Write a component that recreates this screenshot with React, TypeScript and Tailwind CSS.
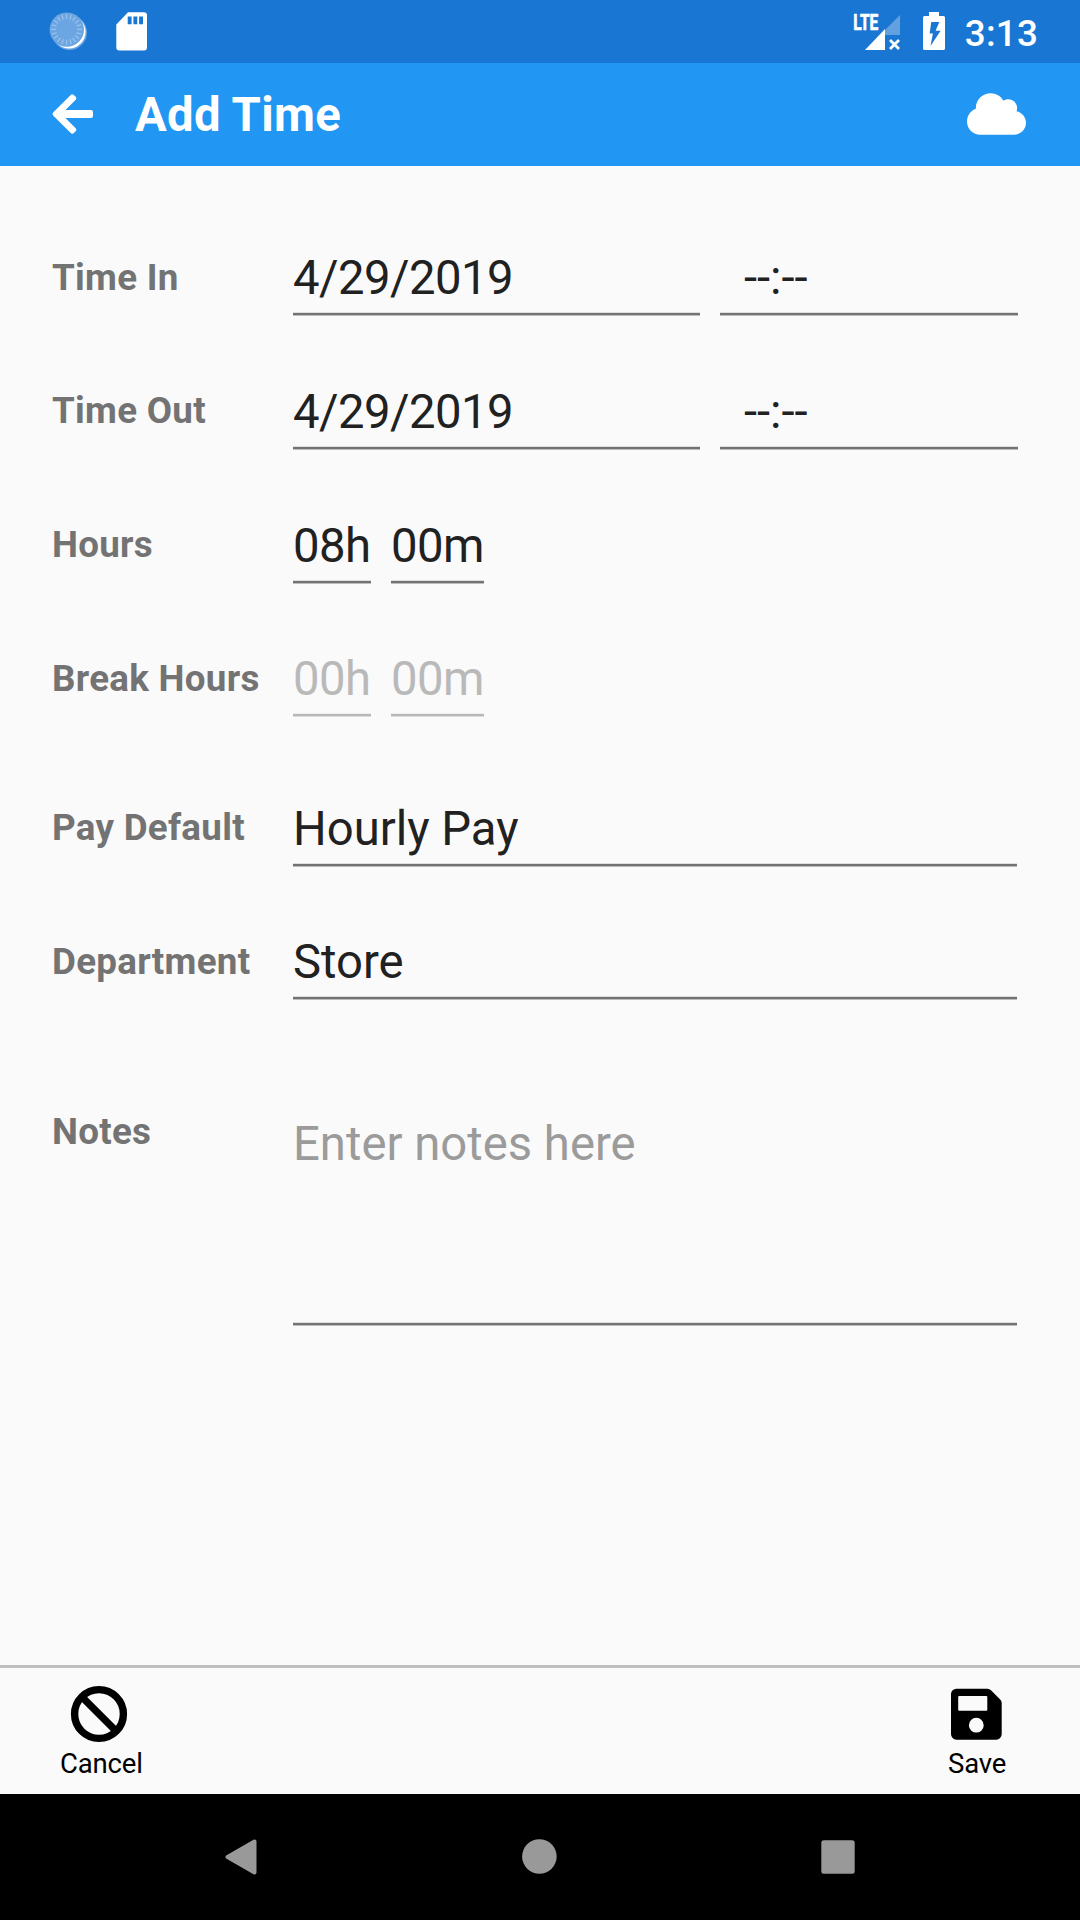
import React from "react";
import { FaCloud } from "react-icons/fa";

interface UnderlineProps {
  disabled?: boolean;
}

const Underline: React.FC<UnderlineProps> = ({ disabled }) => (
  <div
    className={`h-1 w-full border-y ${
      disabled ? "border-t-[#eeeeee] border-b-[#dcdcdc] bg-[#b8b8b8]" : "border-t-[#dedede] border-b-[#bdbdbd] bg-[#737373]"
    }`}
  />
);

interface FieldProps {
  value: string;
  className?: string;
  textClassName?: string;
  disabled?: boolean;
}

const Field: React.FC<FieldProps> = ({ value, className = "", textClassName = "", disabled }) => (
  <div className={`flex h-[66px] flex-col justify-between ${className}`}>
    <div
      className={`text-[47.25px] leading-[56px] whitespace-pre ${
        disabled ? "text-[#b9b9b9]" : "text-[#212121]"
      } ${textClassName}`}
    >
      {value}
    </div>
    <Underline disabled={disabled} />
  </div>
);

interface RowProps {
  label: string;
  className?: string;
  labelClassName?: string;
  children: React.ReactNode;
}

const Row: React.FC<RowProps> = ({ label, className = "", labelClassName = "pt-[5px]", children }) => (
  <div className={`flex items-start ${className}`}>
    <div
      className={`w-[241px] shrink-0 text-[36.75px] leading-[44px] font-bold tracking-[0.28px] whitespace-nowrap text-[#737373] ${labelClassName}`}
    >
      {label}
    </div>
    <div className="flex flex-1 gap-5">{children}</div>
  </div>
);

/** Ticks around the sync spinner in the status bar */
const TICKS = Array.from({ length: 20 }, (_, i) => i * 18);

const StatusBar: React.FC = () => (
  <div className="flex h-[63px] items-start justify-between bg-[#1976d2] pr-[42px] pl-12 text-white">
    <div className="flex items-start gap-7 pt-3">
      <svg width="40" height="40" viewBox="0 0 40 40" aria-hidden="true">
        <circle cx="21.5" cy="20.5" r="17.5" fill="#fff" opacity="0.35" />
        <circle cx="21" cy="19.8" r="16.6" fill="#fff" />
        <circle cx="18.8" cy="17.6" r="17.2" fill="#6ba6e2" />
        {TICKS.map((deg) => (
          <line
            key={deg}
            x1="18.5"
            y1="2"
            x2="18.5"
            y2="7"
            stroke="#98c1eb"
            strokeWidth="1.3"
            transform={`rotate(${deg} 18.5 17.4)`}
          />
        ))}
      </svg>
      <svg width="31" height="39" viewBox="0 0 31 39" aria-hidden="true">
        <path d="M12 .3H28a3 3 0 0 1 3 3V35.500a3 3 0 0 1-3 3H3.300a3 3 0 0 1-3-3V12.500Z" fill="#fff" />
        <path d="M11.700 4.500h3.900v7.800h-3.900zM17.400 4.500h3.900v7.800h-3.900zM23.100 4.500h3.900v7.800h-3.900z" fill="#1976d2" />
      </svg>
    </div>

    <div className="flex items-start">
      <svg width="50" height="51" viewBox="-2 0 50 51" aria-hidden="true">
        <path d="M47 15v20H32V30Z" fill="#63a0e0" />
        <path d="M12 50 32 29V50Z" fill="#fff" />
        <path d="M37 40l9 9M46 40l-9 9" stroke="#fff" strokeWidth="2.8" />
        <text
          x="0.300"
          y="29.700"
          textLength="25"
          lengthAdjust="spacingAndGlyphs"
          stroke="#fff"
          strokeWidth="0.700"
          className="fill-white font-['Roboto'] text-[22px] font-bold"
        >
          LTE
        </text>
      </svg>
      <svg width="22" height="38" viewBox="0 0 22 38" className="mt-3 ml-[22px]" aria-hidden="true">
        <path d="M6 0h10v4h4.500A1.500 1.500 0 0 1 22 5.500v31a1.500 1.500 0 0 1-1.500 1.500h-19A1.500 1.500 0 0 1 0 36.500v-31A1.500 1.500 0 0 1 1.500 4H6Z" fill="#fff" />
        <path d="M8.300 10h8l-3.700 8.700h5L7.500 34l2.400-12.600H6.600Z" fill="#1976d2" />
      </svg>
      <span className="ml-5 pt-3 text-[36.75px] leading-[44px] font-medium tracking-[0.2px]">3:13</span>
    </div>
  </div>
);

const AppBar: React.FC = () => (
  <header className="flex h-[103px] items-start justify-between bg-[#2196f3] pr-[54px] pl-[50px] text-white">
    <div className="flex items-start">
      <button aria-label="Back" className="pt-[29px]">
        <svg width="45" height="44" viewBox="150 277 135 132" aria-hidden="true">
          <path
            d="M163.500 343 216.500 290 223 296 181.500 337H273V349H181.500L223 390 216.500 396Z"
            fill="#fff"
            stroke="#fff"
            strokeWidth="12"
            strokeLinejoin="round"
          />
        </svg>
      </button>
      <h1 className="ml-10 pt-6 text-[47.25px] leading-[56px] font-bold tracking-[0.28px]">Add Time</h1>
    </div>
    <button aria-label="Sync" className="pt-[27px]">
      <FaCloud className="h-[48px] w-[59px]" />
    </button>
  </header>
);

const BottomBar: React.FC = () => (
  <footer className="flex h-[129px] items-start justify-between border-t-[3px] border-[#bfbfbf] pr-[73px] pl-[60px] text-[27.5px] leading-8 tracking-[-0.15px] text-black">
    <button className="flex flex-col items-start pt-[17px]">
      <svg width="58" height="58" viewBox="0 0 58 58" className="ml-[10px]" aria-hidden="true">
        <circle cx="29" cy="29" r="24.400" fill="none" stroke="#000" strokeWidth="7.400" />
        <path d="M12.500 12.500l33 33" stroke="#000" strokeWidth="7.400" />
      </svg>
      <span className="mt-[5px]">Cancel</span>
    </button>
    <button className="flex w-[59px] flex-col items-start pt-[17px]">
      <svg width="58" height="58" viewBox="0 0 58 58" aria-hidden="true">
        <path
          fillRule="evenodd"
          d="M8.400 3.700H39.500a5 5 0 0 1 3.500 1.500L52.200 14.400a5 5 0 0 1 1.500 3.500V49.300a5.400 5.400 0 0 1-5.400 5.400H8.400A5.400 5.400 0 0 1 3 49.300V9.100A5.400 5.400 0 0 1 8.400 3.700ZM11.200 11a1 1 0 0 0-1 1V24.800a1 1 0 0 0 1 1H38.300a1 1 0 0 0 1-1V12a1 1 0 0 0-1-1ZM28.300 32.800a7.400 7.400 0 1 0 0 14.800a7.400 7.400 0 1 0 0-14.800Z"
        />
      </svg>
      <span className="mt-[5px]">Save</span>
    </button>
  </footer>
);

const NavBar: React.FC = () => (
  <nav className="flex h-[126px] items-center justify-between bg-black pr-[224px] pl-[222px]">
    <svg width="36" height="36" viewBox="0 0 36 36" aria-hidden="true">
      <path d="M5.500 18 32.500 2.500V33.500Z" fill="#999" stroke="#999" strokeWidth="4" strokeLinejoin="round" />
    </svg>
    <svg width="36" height="36" viewBox="0 0 36 36" aria-hidden="true">
      <circle cx="18.400" cy="17.500" r="17.300" fill="#999" />
    </svg>
    <svg width="36" height="36" viewBox="0 0 36 36" aria-hidden="true">
      <rect x="1.300" y="1.300" width="33.400" height="33.400" rx="2.500" fill="#999" />
    </svg>
  </nav>
);

export default function App() {
  return (
    <div className="flex h-[1920px] w-[1080px] flex-col overflow-hidden bg-[#fafafa] font-['Roboto',sans-serif]">
      <StatusBar />
      <AppBar />

      <main className="flex-1 pt-[84px] pr-[62px] pl-[52px]">
        <Row label="Time In" labelClassName="pt-[6px]">
          <Field value="4/29/2019" className="w-[407px]" textClassName="tracking-[-0.53px]" />
          <Field value="--:--" className="flex-1" textClassName="pl-6" />
        </Row>
        <Row label="Time Out" className="mt-[68px]">
          <Field value="4/29/2019" className="w-[407px]" textClassName="tracking-[-0.53px]" />
          <Field value="--:--" className="flex-1" textClassName="pl-6" />
        </Row>
        <Row label="Hours" className="mt-[68px]">
          <Field value="08h" className="w-[78px]" textClassName="tracking-[-0.5px]" />
          <Field value="00m" className="w-[93px]" textClassName="tracking-[-0.5px]" />
        </Row>
        <Row label="Break Hours" className="mt-[67px]" labelClassName="pt-[6px]">
          <Field value="00h" className="w-[78px]" textClassName="tracking-[-0.5px]" disabled />
          <Field value="00m" className="w-[93px]" textClassName="tracking-[-0.5px]" disabled />
        </Row>
        <Row label="Pay Default" className="mt-[84px] pr-px">
          <Field value="Hourly Pay" className="flex-1" />
        </Row>
        <Row label="Department" className="mt-[67px] pr-px" labelClassName="pt-[6px]">
          <Field value="Store" className="flex-1" />
        </Row>
        <Row label="Notes" className="mt-[105px] pr-px">
          <div className="flex h-[221px] flex-1 flex-col justify-between pt-[11px]">
            <div className="text-[47.25px] leading-[56px] text-[#9b9b9b]">Enter notes here</div>
            <Underline />
          </div>
        </Row>
      </main>

      <BottomBar />
      <NavBar />
    </div>
  );
}
